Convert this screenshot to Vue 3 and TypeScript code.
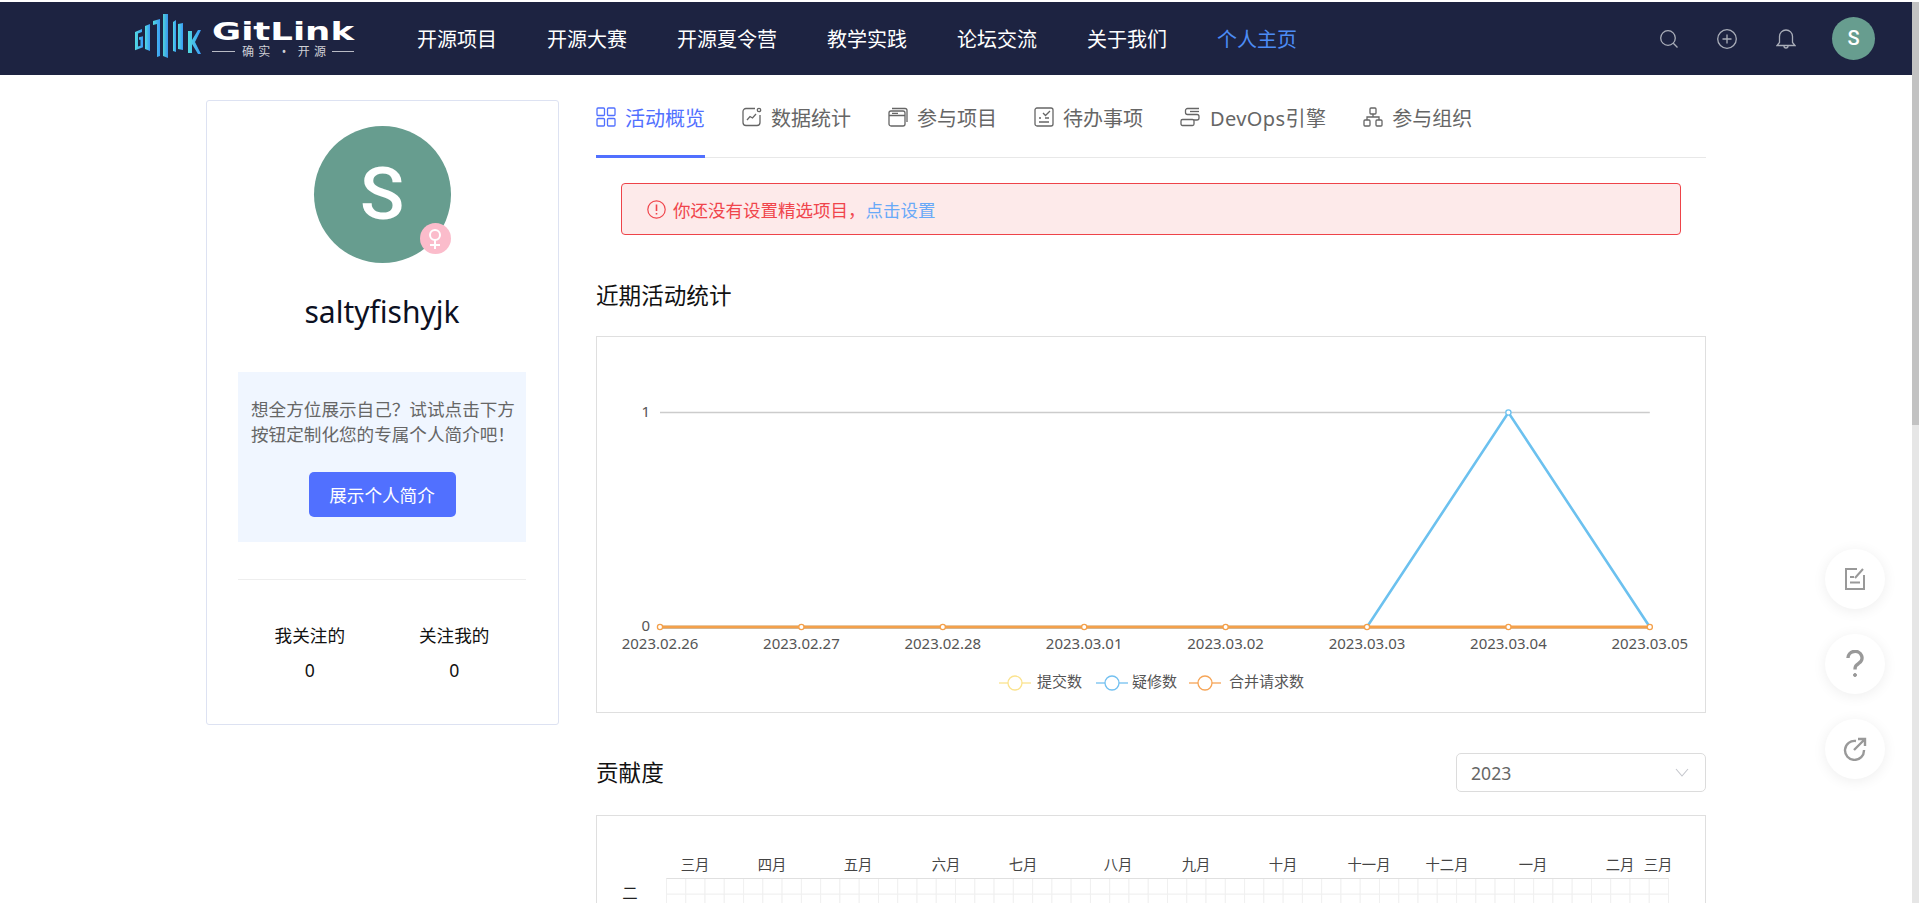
<script setup lang="ts">
interface Tab {
  label: string
  icon: string
}

const navItems = ['开源项目', '开源大赛', '开源夏令营', '教学实践', '论坛交流', '关于我们', '个人主页']

const tabs: Tab[] = [
  { label: '活动概览', icon: 'grid' },
  { label: '数据统计', icon: 'chart' },
  { label: '参与项目', icon: 'window' },
  { label: '待办事项', icon: 'todo' },
  { label: 'DevOps引擎', icon: 'devops' },
  { label: '参与组织', icon: 'org' },
]

// chart geometry, in px inside the bordered box
const chartX = (i: number) => 63 + i * 141.4
const chartY = (v: number) => 290 - v * 214.5
const dates = ['2023.02.26', '2023.02.27', '2023.02.28', '2023.03.01', '2023.03.02', '2023.03.03', '2023.03.04', '2023.03.05']
const issues = [0, 0, 0, 0, 0, 0, 1, 0]
const toPoints = (vals: number[]) => vals.map((v, i) => `${chartX(i)},${chartY(v)}`).join(' ')
const zeros = dates.map(() => 0)

const legend = [
  { label: '提交数', color: '#fbe38e', cx: 418, tx: 440 },
  { label: '疑修数', color: '#73c0f0', cx: 515, tx: 535 },
  { label: '合并请求数', color: '#f6a557', cx: 608, tx: 632 },
]

// contribution heatmap
const cellW = 19.27
const cellH = 15.7
const months = [
  { label: '三月', x: 98 }, { label: '四月', x: 175 }, { label: '五月', x: 261 }, { label: '六月', x: 349 },
  { label: '七月', x: 426 }, { label: '八月', x: 521 }, { label: '九月', x: 599 }, { label: '十月', x: 686 },
  { label: '十一月', x: 772 }, { label: '十二月', x: 850 }, { label: '一月', x: 936 }, { label: '二月', x: 1023 },
  { label: '三月', x: 1061 },
]
const cols = Array.from({ length: 52 }, (_, i) => i)
const rows = Array.from({ length: 7 }, (_, i) => i)
</script>

<template>
  <div class="page">
    <div class="viewport">
      <header class="topbar">
        <svg class="logo" width="222" height="50" viewBox="0 0 222 50">
          <defs>
            <linearGradient id="logoGrad" x1="0" y1="0" x2="1" y2="0">
              <stop offset="0" stop-color="#52dbe0" />
              <stop offset="1" stop-color="#3a9af6" />
            </linearGradient>
          </defs>
          <g fill="url(#logoGrad)">
            <path d="M0 18l7-3v3l-4 1.500v13l2.500-.8v-6H4v-2.500l4-1v11l-8 3z" />
            <path d="M10 12l5-2v27l-5-2z" />
            <path d="M18 7l7-2v37l-3 1V10l-4 1z" />
            <path d="M28 0h5v44l-5-2z" opacity=".95" />
            <path d="M38 8l3-2v32l-3-1z" />
            <path d="M43 10l5-1v27l-5-1z" />
            <path d="M53 17h4v9l6-10h3l-6 12 6 12h-3l-6-10v9h-4z" />
          </g>
          <text class="logo-name" x="77" y="26" textLength="142" lengthAdjust="spacingAndGlyphs">GitLink</text>
          <path d="M77 37.500h23M197 37.500h22" stroke="#b8bac4" stroke-width="1" />
          <text class="logo-sub" x="107" y="42" textLength="84">确实 • 开源</text>
        </svg>
        <nav class="nav">
          <a v-for="(item, i) in navItems" :key="item" class="nav-item" :class="{ active: i === navItems.length - 1 }">{{ item }}</a>
        </nav>
        <div class="top-actions">
          <svg class="act search" width="20" height="20" viewBox="0 0 20 20" fill="none" stroke="#a9adb8" stroke-width="1.300">
            <circle cx="9" cy="9" r="7.300" /><path d="M14.300 14.300l4.200 4.200" />
          </svg>
          <svg class="act plus" width="20" height="20" viewBox="0 0 20 20" fill="none" stroke="#a9adb8" stroke-width="1.300">
            <circle cx="10" cy="10" r="9.300" /><path d="M10 5.500v9M5.500 10h9" />
          </svg>
          <svg class="act bell" width="20" height="22" viewBox="0 0 20 22" fill="none" stroke="#a9adb8" stroke-width="1.300">
            <path d="M1 17.500h18l-2.500-3V8.500a6.500 6.500 0 0 0-13 0v6z" /><path d="M8 18a2 2 0 0 0 4 0" />
          </svg>
          <div class="top-avatar">S</div>
        </div>
      </header>

      <div class="content">
        <aside class="profile">
          <div class="avatar-wrap">
            <div class="avatar">S</div>
            <div class="gender">
              <svg width="18" height="22" viewBox="0 0 18 22" fill="none" stroke="#fff" stroke-width="2">
                <circle cx="9" cy="7" r="5" /><path d="M9 12v9M4 17h10" />
              </svg>
            </div>
          </div>
          <div class="username">saltyfishyjk</div>
          <div class="intro">
            <p>想全方位展示自己？试试点击下方按钮定制化您的专属个人简介吧！</p>
            <button class="intro-btn">展示个人简介</button>
          </div>
          <div class="divider"></div>
          <div class="follows">
            <div class="follow"><span>我关注的</span><span>0</span></div>
            <div class="follow"><span>关注我的</span><span>0</span></div>
          </div>
        </aside>

        <main class="main">
          <div class="tabs">
            <div v-for="(tab, i) in tabs" :key="tab.label" class="tab" :class="{ active: i === 0, wide: tab.icon === 'devops' }">
              <svg width="20" height="20" viewBox="0 0 20 20" fill="none" stroke="currentColor" stroke-width="1.300">
                <template v-if="tab.icon === 'grid'">
                  <rect x="1" y="1" width="7.500" height="7.500" rx="1" /><rect x="11.500" y="1" width="7.500" height="7.500" rx="1" />
                  <rect x="1" y="11.500" width="7.500" height="7.500" rx="1" /><rect x="11.500" y="11.500" width="7.500" height="7.500" rx="1" />
                </template>
                <template v-else-if="tab.icon === 'chart'">
                  <path d="M13 1.500H4a3 3 0 0 0-3 3v11a3 3 0 0 0 3 3h11a3 3 0 0 0 3-3V8" />
                  <circle cx="17" cy="3" r="1.700" /><path d="M5 13l3-3.500 2.500 1.500 3.500-4" />
                </template>
                <template v-else-if="tab.icon === 'window'">
                  <path d="M4 1.500h13a2 2 0 0 1 2 2V15" />
                  <rect x="1" y="4" width="16" height="15" rx="2" /><path d="M1 8.500h16M4 6.300h6" />
                </template>
                <template v-else-if="tab.icon === 'todo'">
                  <rect x="1" y="1" width="18" height="18" rx="2" />
                  <path d="M5 15h10M11 11h4M9 6l2.500 2.500L16 4M5 11h2" />
                </template>
                <template v-else-if="tab.icon === 'devops'">
                  <rect x="1" y="12.500" width="13" height="6" rx="1.500" />
                  <path d="M19 1.500H7.500a2 2 0 0 0-2 2v2a2 2 0 0 0 2 2H17a2 2 0 0 1 2 2v1.500a2 2 0 0 1-2 2h-3" />
                  <path d="M10 4.500h9" />
                </template>
                <template v-else>
                  <rect x="7" y="1" width="6" height="6" rx="1" /><rect x="1" y="13" width="6" height="6" rx="1" /><rect x="13" y="13" width="6" height="6" rx="1" />
                  <path d="M10 7v3M4 13v-3h12v3" />
                </template>
              </svg>
              <span>{{ tab.label }}</span>
            </div>
          </div>

          <div class="alert">
            <svg width="19" height="19" viewBox="0 0 19 19" fill="none" stroke="#f0454c" stroke-width="1.200">
              <circle cx="9.500" cy="9.500" r="8.700" /><path d="M9.500 4.500v6.500M9.500 13v1.500" stroke-width="1.600" />
            </svg>
            <span>你还没有设置精选项目，<a class="alert-link">点击设置</a></span>
          </div>

          <h3 class="section-title activity-title">近期活动统计</h3>
          <div class="chart-box">
            <svg class="chart" width="1108" height="375" viewBox="0 0 1108 375">
              <line :x1="chartX(0)" :x2="chartX(7)" :y1="chartY(1)" :y2="chartY(1)" stroke="#ccc" stroke-width="1.300" />
              <line :x1="chartX(0)" :x2="chartX(7)" :y1="chartY(0) + 1" :y2="chartY(0) + 1" stroke="#bbb" stroke-width="1.300" />
              <text class="axis" x="53" :y="chartY(1) + 4" text-anchor="end">1</text>
              <text class="axis" x="53" :y="chartY(0) + 4" text-anchor="end">0</text>
              <polyline :points="toPoints(issues)" fill="none" stroke="#6cc1ef" stroke-width="2.600" />
              <polyline :points="toPoints(zeros)" fill="none" stroke="#f4a04a" stroke-width="3" />
              <circle :cx="chartX(6)" :cy="chartY(1)" r="2.600" fill="#fff" stroke="#6cc1ef" stroke-width="1.300" />
              <circle v-for="(d, i) in dates" :key="d" :cx="chartX(i)" :cy="chartY(0)" r="2.600" fill="#fff" stroke="#f4a04a" stroke-width="1.300" />
              <text v-for="(d, i) in dates" :key="'t' + d" class="axis" :x="chartX(i)" :y="chartY(0) + 22" text-anchor="middle">{{ d }}</text>
              <g v-for="l in legend" :key="l.label">
                <line :x1="l.cx - 16" :x2="l.cx + 16" y1="346" y2="346" :stroke="l.color" stroke-width="1.300" />
                <circle :cx="l.cx" cy="346" r="7" fill="#fff" :stroke="l.color" stroke-width="1.300" />
                <text class="legend" :x="l.tx" y="350">{{ l.label }}</text>
              </g>
            </svg>
          </div>

          <div class="contrib-head">
            <h3 class="section-title">贡献度</h3>
            <div class="year-select">
              <span>2023</span>
              <svg width="14" height="9" viewBox="0 0 14 9" fill="none" stroke="#c4c6cc" stroke-width="1.100"><path d="M1 1l6 7 6-7" /></svg>
            </div>
          </div>
          <div class="heat-box">
            <svg width="1108" height="240" viewBox="0 0 1108 240">
              <text v-for="(m, i) in months" :key="i" class="month" :x="m.x" y="54" text-anchor="middle">{{ m.label }}</text>
              <text class="weekday" x="33" y="83" text-anchor="middle">二</text>
              <g transform="translate(69.500 62.500)">
                <template v-for="c in cols" :key="c">
                  <rect v-for="r in rows" :key="r" :x="c * cellW" :y="r * cellH" :width="cellW" :height="cellH" fill="#fff" stroke="#f0f0f0" />
                </template>
                <line x1="0" :x2="52 * cellW" y1="0" y2="0" stroke="#e0e0e0" />
              </g>
            </svg>
          </div>
        </main>
      </div>

      <div class="float-btns">
        <div class="float-btn">
          <svg width="22" height="24" viewBox="0 0 22 24" fill="none" stroke="#999" stroke-width="2">
            <path d="M13 2H2v20h18V8" /><path d="M11 11l8-9" /><path d="M6 10h4M6 15.500h10" />
          </svg>
        </div>
        <div class="float-btn">
          <svg width="18" height="28" viewBox="0 0 18 28" fill="none" stroke="#999" stroke-width="3.400">
            <path d="M2 8a7 6.500 0 1 1 10.500 5.500C10 15.300 9 16 9 19.500" /><circle cx="9" cy="25" r="1.500" fill="#999" stroke-width="1" />
          </svg>
        </div>
        <div class="float-btn">
          <svg width="24" height="24" viewBox="0 0 24 24" fill="none" stroke="#999" stroke-width="2.400">
            <path d="M13 4a9.500 9.500 0 1 0 8 9" /><path d="M11 13L22 2M15 2h7v7" />
          </svg>
        </div>
      </div>
    </div>
    <div class="scrollbar"><div class="thumb"></div></div>
  </div>
</template>

<style scoped>
.page {
  display: flex;
  height: 100vh;
  box-sizing: border-box;
  padding-top: 2px;
  overflow: hidden;
  background: #fff;
  font-family: "Noto Sans", "Noto Sans CJK SC", sans-serif;
  color: #111;
}
.viewport {
  position: relative;
  flex: 1;
  min-width: 0;
  overflow: hidden;
}
.scrollbar {
  width: 7px;
  background: #e6e6e6;
}
.thumb {
  height: 423px;
  background: #c2c2c2;
}
.topbar {
  display: flex;
  align-items: center;
  height: 73px;
  background: #1d2341;
}
.logo {
  flex-shrink: 0;
  margin-left: 135px;
}
.logo-name {
  font-family: "DejaVu Sans", sans-serif;
  font-weight: 700;
  font-size: 25px;
  fill: #fff;
}
.logo-sub {
  font-size: 12px;
  fill: #cfd0d6;
}
.nav {
  display: flex;
  gap: 50px;
  margin-left: 60px;
}
.nav-item {
  font-size: 20px;
  color: #fff;
  white-space: nowrap;
}
.nav-item.active {
  color: #4c8cf5;
}
.top-actions {
  display: flex;
  align-items: center;
  margin-left: auto;
  margin-right: 37px;
}
.act.plus {
  margin-left: 38px;
}
.act.bell {
  margin-left: 39px;
}
.top-avatar {
  width: 43px;
  height: 43px;
  margin-left: 36px;
  border-radius: 50%;
  background: #679d8f;
  color: #fff;
  font-family: Roboto, sans-serif;
  font-size: 20px;
  font-weight: 500;
  line-height: 43px;
  text-align: center;
}
.content {
  display: flex;
  gap: 37px;
  padding-left: 206px;
  align-items: flex-start;
}
.profile {
  box-sizing: border-box;
  width: 353px;
  height: 625px;
  margin-top: 25px;
  padding: 25px 32px 0 31px;
  border: 1px solid #dde2f2;
  border-radius: 3px;
  flex-shrink: 0;
}
.avatar-wrap {
  position: relative;
  width: 137px;
  height: 137px;
  margin: 0 auto;
}
.avatar {
  width: 137px;
  height: 137px;
  border-radius: 50%;
  background: #679d8f;
  color: #fff;
  font-family: Roboto, sans-serif;
  font-size: 73px;
  font-weight: 500;
  line-height: 137px;
  text-align: center;
}
.gender {
  position: absolute;
  right: 0;
  bottom: 9px;
  display: flex;
  align-items: center;
  justify-content: center;
  width: 31px;
  height: 31px;
  border-radius: 50%;
  background: #fbbccb;
}
.username {
  margin-top: 29px;
  font-size: 30px;
  line-height: 40px;
  text-align: center;
  color: #0c1022;
}
.intro {
  box-sizing: border-box;
  height: 170px;
  margin-top: 40px;
  padding: 25px 12px 0;
  background: #f0f6ff;
  text-align: center;
}
.intro p {
  margin: 0 -1px 0 1px;
  font-size: 17.600px;
  line-height: 24.700px;
  color: #666;
  text-align: left;
}
.intro-btn {
  width: 147px;
  height: 45px;
  margin-top: 26px;
  border: none;
  border-radius: 5px;
  background: #5170ff;
  color: #fff;
  font-family: inherit;
  font-size: 17.600px;
}
.divider {
  height: 1px;
  margin-top: 37px;
  background: #eee;
}
.follows {
  display: flex;
  justify-content: center;
  gap: 74px;
  margin-top: 42px;
}
.follow {
  display: flex;
  flex-direction: column;
  align-items: center;
  gap: 9px;
  font-size: 17.600px;
  line-height: 26px;
  color: #111;
}
.main {
  width: 1110px;
  flex-shrink: 0;
}
.tabs {
  display: flex;
  gap: 37px;
  box-sizing: border-box;
  height: 83px;
  border-bottom: 1.500px solid #e8e8e8;
}
.tab {
  display: flex;
  align-items: center;
  gap: 9px;
  height: 83px;
  box-sizing: border-box;
  padding-top: 1px;
  font-size: 20px;
  color: #666;
  white-space: nowrap;
}
.tab.wide {
  gap: 10px;
  letter-spacing: 0.400px;
}
.tab.active {
  height: 83px;
  border-bottom: 3px solid #5170ff;
  padding-top: 4px;
  color: #5170ff;
}
.alert {
  display: flex;
  align-items: center;
  gap: 7px;
  box-sizing: border-box;
  height: 52px;
  margin: 25px 25px 0;
  padding-left: 25px;
  border: 1px solid #ee4349;
  border-radius: 4px;
  background: #fdeaea;
  color: #f0454c;
  font-size: 17.500px;
}
.alert-link {
  color: #69a9f8;
}
.section-title {
  margin: 0;
  font-size: 22.600px;
  font-weight: 400;
  line-height: 30px;
  color: #111;
}
.activity-title {
  margin-top: 46px;
}
.chart-box {
  box-sizing: border-box;
  height: 377px;
  margin-top: 25px;
  border: 1px solid #dfdfdf;
}
.chart {
  display: block;
}
.axis {
  font-size: 15px;
  fill: #555;
}
.legend {
  font-size: 15px;
  fill: #555;
}
.contrib-head {
  display: flex;
  align-items: center;
  justify-content: space-between;
  margin-top: 40px;
}
.year-select {
  display: flex;
  align-items: center;
  justify-content: space-between;
  box-sizing: border-box;
  width: 250px;
  height: 39px;
  padding: 0 16px 0 14px;
  border: 1px solid #dcdcdc;
  border-radius: 5px;
  font-size: 17.600px;
  color: #666;
}
.heat-box {
  box-sizing: border-box;
  height: 240px;
  margin-top: 23px;
  border: 1px solid #dfdfdf;
}
.month {
  font-size: 14.300px;
  fill: #444;
}
.weekday {
  font-size: 15.400px;
  fill: #222;
}
.float-btns {
  position: absolute;
  top: 547px;
  right: 27px;
  display: flex;
  flex-direction: column;
  gap: 25px;
}
.float-btn {
  display: flex;
  align-items: center;
  justify-content: center;
  width: 60px;
  height: 60px;
  border-radius: 50%;
  background: #fff;
  box-shadow: 0 2px 14px rgba(0, 0, 0, 0.07);
}
</style>

<style>
html, body {
  margin: 0;
  overflow: hidden;
}
</style>
